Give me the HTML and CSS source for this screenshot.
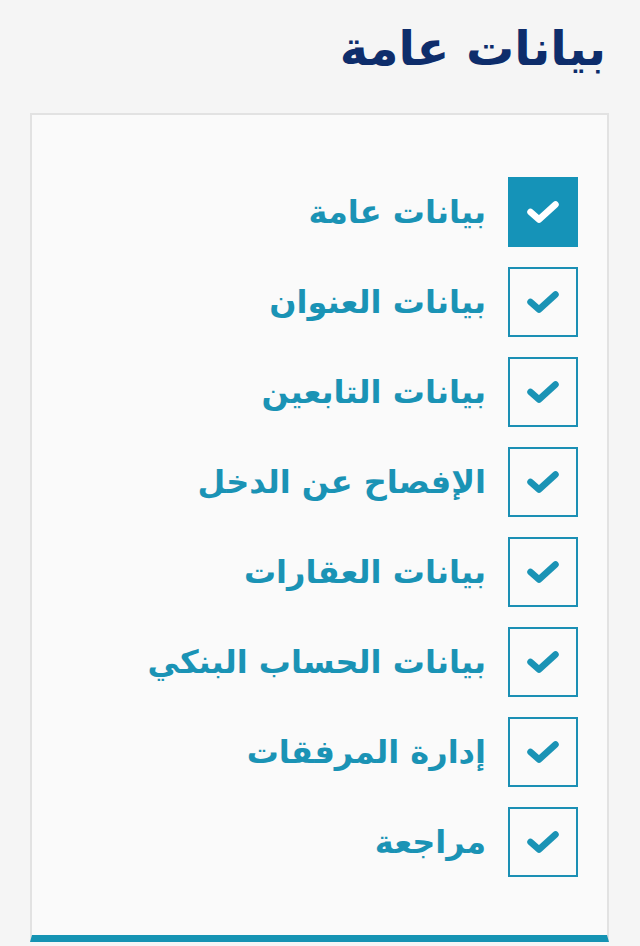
FILE: index.html
```html
<!DOCTYPE html>
<html lang="ar" dir="rtl">
<head>
<meta charset="utf-8">
<title>بيانات عامة</title>
<link rel="stylesheet" href="styles.css">
</head>
<body>
<main class="page">
  <h1 class="title">بيانات عامة</h1>
  <section class="panel">
    <ul class="steps">
      <li class="step">
        <span class="box box-active"><svg class="check" viewBox="0 0 32 22"><path d="M3.5 11 L12 18.5 L28.5 3.5"/></svg></span>
        <span class="label">بيانات عامة</span>
      </li>
      <li class="step">
        <span class="box"><svg class="check" viewBox="0 0 32 22"><path d="M3.5 11 L12 18.5 L28.5 3.5"/></svg></span>
        <span class="label">بيانات العنوان</span>
      </li>
      <li class="step">
        <span class="box"><svg class="check" viewBox="0 0 32 22"><path d="M3.5 11 L12 18.5 L28.5 3.5"/></svg></span>
        <span class="label">بيانات التابعين</span>
      </li>
      <li class="step">
        <span class="box"><svg class="check" viewBox="0 0 32 22"><path d="M3.5 11 L12 18.5 L28.5 3.5"/></svg></span>
        <span class="label">الإفصاح عن الدخل</span>
      </li>
      <li class="step">
        <span class="box"><svg class="check" viewBox="0 0 32 22"><path d="M3.5 11 L12 18.5 L28.5 3.5"/></svg></span>
        <span class="label">بيانات العقارات</span>
      </li>
      <li class="step">
        <span class="box"><svg class="check" viewBox="0 0 32 22"><path d="M3.5 11 L12 18.5 L28.5 3.5"/></svg></span>
        <span class="label">بيانات الحساب البنكي</span>
      </li>
      <li class="step">
        <span class="box"><svg class="check" viewBox="0 0 32 22"><path d="M3.5 11 L12 18.5 L28.5 3.5"/></svg></span>
        <span class="label">إدارة المرفقات</span>
      </li>
      <li class="step">
        <span class="box"><svg class="check" viewBox="0 0 32 22"><path d="M3.5 11 L12 18.5 L28.5 3.5"/></svg></span>
        <span class="label">مراجعة</span>
      </li>
    </ul>
  </section>
</main>
</body>
</html>
```

FILE: styles.css
```css
html, body {
  margin: 0;
  padding: 0;
}
body {
  background: #f5f5f5;
  font-family: "DejaVu Sans", "Noto Sans", sans-serif;
  direction: rtl;
}
.page {
  padding: 0 31px 0 30px;
}
.title {
  margin: 0;
  padding: 16px 3px 0 0;
  height: 113px;
  box-sizing: border-box;
  font-size: 48px;
  line-height: 64px;
  font-weight: bold;
  color: #0e2d6b;
}
.panel {
  background: #fafafa;
  border: 2px solid #e2e2e2;
  border-bottom: 7px solid #1593b3;
  padding: 62px 29px 56px;
  height: 829px;
  box-sizing: border-box;
}
.steps {
  list-style: none;
  margin: 0;
  padding: 0;
  display: flex;
  flex-direction: column;
  gap: 20px;
}
.step {
  display: flex;
  align-items: center;
  gap: 22px;
}
.box {
  width: 70px;
  height: 70px;
  box-sizing: border-box;
  border: 2px solid #1b8fb4;
  display: flex;
  align-items: center;
  justify-content: center;
  flex: none;
}
.box-active {
  background: #1593b8;
  border-color: #1593b8;
}
.check {
  width: 32px;
  height: 22px;
  fill: none;
  stroke: #1a93b5;
  stroke-width: 6.5;
  stroke-linecap: round;
  stroke-linejoin: round;
}
.box-active .check {
  stroke: #ffffff;
}
.label {
  font-size: 32px;
  font-weight: bold;
  color: #1a93b5;
  line-height: 40px;
}
```
